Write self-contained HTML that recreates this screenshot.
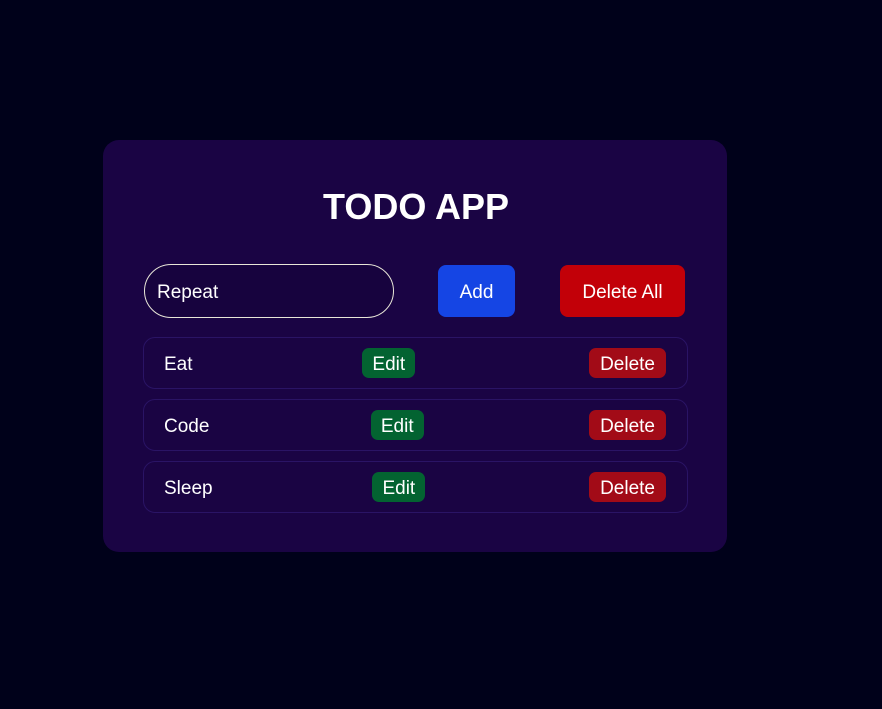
<!DOCTYPE html>
<html><head><style>
body{margin:0;width:882px;height:709px;background:#00011a;font-family:"Liberation Sans",sans-serif;position:relative;overflow:hidden}
.card{position:absolute;left:103px;top:140px;width:624px;height:412px;background:#1a0444;border-radius:16px}
h1{position:absolute;left:0;right:0;top:185px;margin:0;text-align:center;color:#fff;font-size:36px;font-weight:bold;line-height:44px;padding-right:50px}
.inp{position:absolute;left:144px;top:264px;height:52px;border:1px solid #e8e6d8;border-radius:27px;background:#17033e;color:#fff;font-size:19px;line-height:56px;padding-left:12px;width:236px}
.btn{position:absolute;color:#fff;font-size:19px;text-align:center;border-radius:8px}
.row{position:absolute;left:143px;width:502px;height:50px;border:1px solid #2a1465;border-radius:12px;background:#1a0443;display:flex;justify-content:space-between;align-items:center;padding:0 21px 0 20px;color:#fff;font-size:19px;line-height:22px}
.row>span:first-child{padding-top:4px}
.e{background:#036331;border-radius:7px;padding:0 10px;height:30px;line-height:34px;margin-right:4px}
.d{background:#a20b17;border-radius:7px;padding:0 11px;height:30px;line-height:34px}
</style></head><body>
<div class="card"></div>
<h1>TODO APP</h1>
<div class="inp">Repeat</div>
<div class="btn" style="left:438px;top:265px;width:77px;height:52px;line-height:56px;background:#1545e4">Add</div>
<div class="btn" style="left:560px;top:265px;width:125px;height:52px;line-height:56px;background:#c20008">Delete All</div>
<div class="row" style="top:337px"><span>Eat</span><span class="e">Edit</span><span class="d">Delete</span></div>
<div class="row" style="top:399px"><span>Code</span><span class="e">Edit</span><span class="d">Delete</span></div>
<div class="row" style="top:461px"><span>Sleep</span><span class="e">Edit</span><span class="d">Delete</span></div>
</body></html>
